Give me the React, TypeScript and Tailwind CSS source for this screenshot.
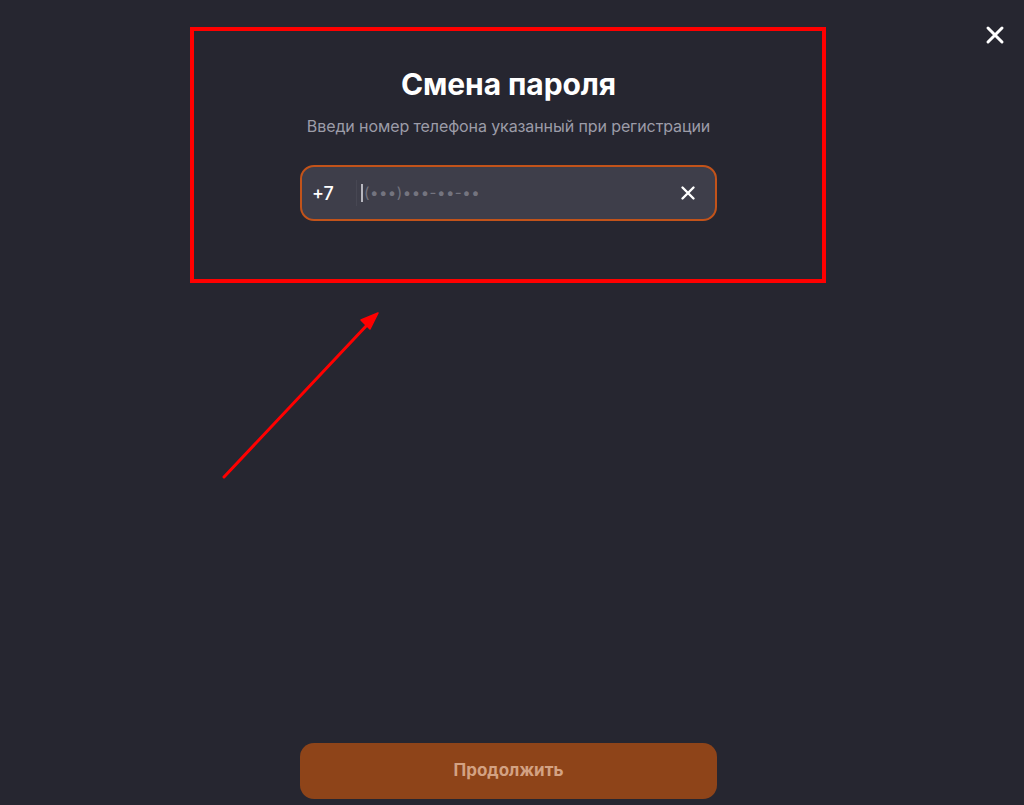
import React from "react";

export default function App() {
  return (
    <div
      className="relative w-[1024px] h-[805px] overflow-hidden bg-[#262630]"
      style={{ fontFamily: "Inter, 'Noto Sans', sans-serif" }}
    >
      {/* close button */}
      <button className="absolute right-[19px] top-[25px] w-[20px] h-[20px] flex items-center justify-center">
        <svg width="20" height="20" viewBox="0 0 20 20" fill="none">
          <path d="M3 3L17 17M17 3L3 17" stroke="white" strokeWidth="3" strokeLinecap="round" />
        </svg>
      </button>

      <div className="flex flex-col items-center w-[1017px] h-full pt-[64px] pb-[6px]">
        <h1 className="text-white text-[30px] font-bold leading-[40px] tracking-[-0.1px]">Смена пароля</h1>
        <p className="mt-[12px] text-[#9c9ca8] text-[16px] leading-[20px] tracking-[-0.1px]">
          Введи номер телефона указанный при регистрации
        </p>

        <div className="mt-[29px] w-[417px] h-[56px] rounded-[14px] border-[2px] border-[#c2531a] bg-[#3e3e4a] flex items-center pl-[10px] pr-[19px]">
          <span className="text-white text-[18px] font-medium w-[34px]">+7</span>
          <span className="w-px h-[26px] bg-[#474753] ml-[10px]" />
          <span className="w-[2px] h-[18px] bg-[#b8b8c0] ml-[4px]" />
          <span className="ml-[1px] text-[#74747f] text-[15px] tracking-[0.5px]">(•••)•••-••-••</span>
          <span className="flex-1" />
          <svg width="16" height="16" viewBox="0 0 16 16" fill="none">
            <path d="M2.5 2.5L13.5 13.5M13.5 2.5L2.5 13.5" stroke="white" strokeWidth="2.4" strokeLinecap="round" />
          </svg>
        </div>

        <div className="flex-1" />

        <button className="w-[417px] h-[56px] rounded-[14px] bg-[#8e4419] text-[#d3a283] text-[17px] font-bold">
          Продолжить
        </button>
      </div>

      {/* annotation overlay */}
      <div className="absolute left-[190px] top-[27px] w-[636px] h-[256px] border-[4px] border-[#ff0000] pointer-events-none" />
      <svg className="absolute left-0 top-0 pointer-events-none" width="1024" height="805">
        <line x1="224" y1="477" x2="368" y2="324" stroke="#ff0000" strokeWidth="3" strokeLinecap="round" />
        <polygon points="378,313 361,320 370,329" fill="#ff0000" stroke="#ff0000" strokeWidth="1.5" strokeLinejoin="round" />
      </svg>
    </div>
  );
}
